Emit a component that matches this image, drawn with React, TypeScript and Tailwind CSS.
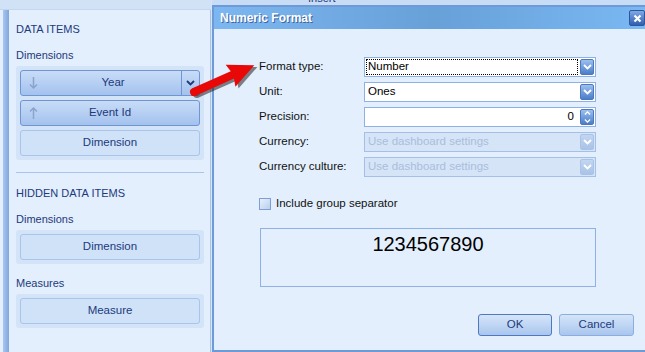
import React from "react";

/**
 * Dashboard designer – "Numeric Format" dialog over the data items panel.
 */

const font = "font-['Liberation_Sans',Arial,sans-serif]";

const Chevron = ({ up = false }: { up?: boolean }) => (
  <svg width="9" height="6" viewBox="0 0 9 6">
    <path
      d={up ? "M1 5 L4.5 1.5 L8 5" : "M1 1 L4.5 4.5 L8 1"}
      fill="none"
      stroke="white"
      strokeWidth="1.8"
    />
  </svg>
);

const DropButton = ({ disabled = false }: { disabled?: boolean }) => (
  <div
    className={`flex h-[16px] w-[14px] items-center justify-center rounded-[2px] border ${
      disabled
        ? "border-[#a9c3e8] bg-gradient-to-b from-[#c2d6f1] to-[#a9c2e6]"
        : "border-[#4e78bd] bg-gradient-to-b from-[#9cc0ef] to-[#4b7dc9]"
    }`}
  >
    <Chevron />
  </div>
);

const SpinButton = () => (
  <div className="flex h-[16px] w-[14px] flex-col items-center justify-center gap-[1px] rounded-[2px] border border-[#4e78bd] bg-gradient-to-b from-[#9cc0ef] to-[#4b7dc9]">
    <div className="scale-75">
      <Chevron up />
    </div>
    <div className="h-px w-[10px] bg-white/70" />
    <div className="scale-75">
      <Chevron />
    </div>
  </div>
);

interface Field {
  label: string;
  value: string;
  kind: "select" | "spin" | "disabled";
  focused?: boolean;
}

const fields: Field[] = [
  { label: "Format type:", value: "Number", kind: "select", focused: true },
  { label: "Unit:", value: "Ones", kind: "select" },
  { label: "Precision:", value: "0", kind: "spin" },
  { label: "Currency:", value: "Use dashboard settings", kind: "disabled" },
  { label: "Currency culture:", value: "Use dashboard settings", kind: "disabled" },
];

const SortArrow = ({ dir }: { dir: "up" | "down" }) => (
  <svg width="9" height="12" viewBox="0 0 9 12">
    {dir === "down" ? (
      <path d="M4.5 0 V11 M1 7.5 L4.5 11 L8 7.5" fill="none" stroke="#8aa4cc" strokeWidth="1.5" />
    ) : (
      <path d="M4.5 12 V1 M1 4.5 L4.5 1 L8 4.5" fill="none" stroke="#8aa4cc" strokeWidth="1.5" />
    )}
  </svg>
);

const ItemButton = ({
  label,
  variant,
  arrow,
  menu,
}: {
  label: string;
  variant: "active" | "empty";
  arrow?: "up" | "down";
  menu?: boolean;
}) => (
  <div
    className={`flex h-[26px] items-center rounded-[3px] border text-[11.5px] text-[#1d3a7c] ${
      variant === "active"
        ? "border-[#6f95d2] bg-gradient-to-b from-[#c8dcf7] to-[#a4c2ee]"
        : "border-[#a8c4ea] bg-[#cfe2f8]"
    }`}
  >
    <div className="flex w-[24px] pl-[8px]">{arrow && <SortArrow dir={arrow} />}</div>
    <div className="flex-1 text-center">{label}</div>
    {menu ? (
      <div className="flex h-full w-[18px] items-center justify-center border-l border-[#6f95d2]">
        <svg width="9" height="6" viewBox="0 0 9 6">
          <path d="M1 1 L4.5 4.5 L8 1" fill="none" stroke="#1d3a7c" strokeWidth="1.8" />
        </svg>
      </div>
    ) : (
      <div className="w-[24px]" />
    )}
  </div>
);

const Group = ({ children }: { children: React.ReactNode }) => (
  <div className="flex flex-col gap-[4px] rounded-[3px] bg-[#d3e3f8] p-[4px]">{children}</div>
);

const Caption = ({ children, className = "" }: { children: React.ReactNode; className?: string }) => (
  <div className={`h-[14px] text-[11px] leading-[14px] text-[#1d3a7c] ${className}`}>{children}</div>
);

export default function App() {
  return (
    <div className={`relative flex h-[352px] w-[645px] overflow-hidden bg-[#d5e4f7] ${font}`}>
      {/* left: data items panel */}
      <div className="flex w-[211px] shrink-0 flex-col">
        <div className="h-[10px] border-b border-[#c3d7f2] bg-[#d2e2f6]" />
        <div className="flex flex-1 border-r border-[#a9c4ea] bg-[#e3effd] pl-[3px]">
          <div className="w-[6px] bg-gradient-to-r from-[#a9c6ef] to-[#7fa6dd]" />
          <div className="flex flex-1 flex-col pl-[7px] pr-[6px]">
            <Caption className="mt-[12px]">DATA ITEMS</Caption>
            <Caption className="mt-[12px]">Dimensions</Caption>
            <div className="mt-[4px]">
              <Group>
                <ItemButton label="Year" variant="active" arrow="down" menu />
                <ItemButton label="Event Id" variant="active" arrow="up" />
                <ItemButton label="Dimension" variant="empty" />
              </Group>
            </div>
            <div className="mt-[12px] h-px bg-[#a9c4ea]" />
            <Caption className="mt-[13px]">HIDDEN DATA ITEMS</Caption>
            <Caption className="mt-[12px]">Dimensions</Caption>
            <div className="mt-[4px]">
              <Group>
                <ItemButton label="Dimension" variant="empty" />
              </Group>
            </div>
            <Caption className="mt-[12px]">Measures</Caption>
            <div className="mt-[4px]">
              <Group>
                <ItemButton label="Measure" variant="empty" />
              </Group>
            </div>
          </div>
        </div>
      </div>

      {/* right: ribbon strip + dialog */}
      <div className="flex w-[440px] shrink-0 flex-col pl-px">
        <div className="h-[5px] overflow-hidden bg-[#c9dcf5] pl-[96px]">
          <div className="mt-[-8px] text-[11px] leading-[13px] text-[#1d3a7c]">Insert</div>
        </div>
        <div className="flex flex-1 flex-col border-2 border-r-0 border-[#6e9ad8] bg-[#e3effd]">
          {/* title bar */}
          <div className="flex h-[22px] items-center justify-between bg-gradient-to-r from-[#7db7f1] via-[#68a0d8] to-[#7ab9f4] pl-[6px] pr-[6px]">
            <span className="text-[12px] font-bold text-white [text-shadow:1px_1px_0_#3c64a0]">
              Numeric Format
            </span>
            <div className="flex h-[16px] w-[16px] items-center justify-center rounded-[2px] border border-[#2d569e] bg-gradient-to-b from-[#7fa9e6] to-[#2f5fb0]">
              <svg width="9" height="9" viewBox="0 0 9 9">
                <path d="M1.5 1.5 L7.5 7.5 M7.5 1.5 L1.5 7.5" stroke="white" strokeWidth="2.2" />
              </svg>
            </div>
          </div>

          {/* body */}
          <div className="flex flex-1 flex-col pl-[45px] pt-[28px]">
            <div className="flex flex-col gap-[5px]">
              {fields.map((f) => (
                <div key={f.label} className="flex h-[20px] items-center">
                  <div className="w-[105px] text-[11.5px] text-[#111]">{f.label}</div>
                  <div
                    className={`flex h-[20px] w-[232px] items-center border px-[1px] text-[11.5px] ${
                      f.kind === "disabled"
                        ? "border-[#a4c0e8] bg-[#d6e4f7] text-[#a8bedc]"
                        : "border-[#8db1e6] bg-white text-black"
                    }`}
                  >
                    <div
                      className={`flex h-[16px] flex-1 items-center px-[1px] ${
                        f.focused ? "border border-dotted border-black" : "border border-transparent"
                      } ${f.kind === "spin" ? "justify-end pr-[3px]" : ""}`}
                    >
                      {f.value}
                    </div>
                    <div className="ml-[2px]">
                      {f.kind === "spin" ? <SpinButton /> : <DropButton disabled={f.kind === "disabled"} />}
                    </div>
                  </div>
                </div>
              ))}
            </div>

            <div className="mt-[20px] flex h-[13px] items-center gap-[5px] pl-[0px]">
              <div className="h-[12px] w-[12px] border border-[#7d9fd3] bg-gradient-to-br from-[#e8f0fb] to-[#b9cfee]" />
              <span className="text-[11.5px] text-[#111]">Include group separator</span>
            </div>

            <div className="mt-[18px] ml-[1px] flex h-[59px] w-[336px] justify-center border border-[#8db2e3] pt-[3px]">
              <span className="text-[20px] leading-[24px] text-black">1234567890</span>
            </div>

            <div className="mt-[27px] flex gap-[7px] pl-[219px]">
              <div className="flex h-[22px] w-[74px] items-center justify-center rounded-[3px] border border-[#4f78bf] bg-gradient-to-b from-[#d5e5f9] to-[#a9c6ee] text-[11.5px] text-[#1d3a7c]">
                OK
              </div>
              <div className="flex h-[22px] w-[75px] items-center justify-center rounded-[3px] border border-[#8cadde] bg-gradient-to-b from-[#d5e5f9] to-[#a9c6ee] text-[11.5px] text-[#1d3a7c]">
                Cancel
              </div>
            </div>
          </div>
        </div>
      </div>

      {/* red callout arrow */}
      <svg className="pointer-events-none absolute left-0 top-0" width="645" height="352">
        <g transform="translate(194 92) rotate(-24)">
          <g transform="translate(2 3)" opacity="0.55">
            <path d="M0 -4 L42 -4 L40 -12 L66 0 L40 12 L42 4 L0 4 Z" fill="#222" />
            <circle cx="0" cy="0" r="4" fill="#222" />
          </g>
          <path d="M0 -4 L42 -4 L40 -12 L66 0 L40 12 L42 4 L0 4 Z" fill="#e80808" />
          <circle cx="0" cy="0" r="4" fill="#e80808" />
        </g>
      </svg>
    </div>
  );
}
